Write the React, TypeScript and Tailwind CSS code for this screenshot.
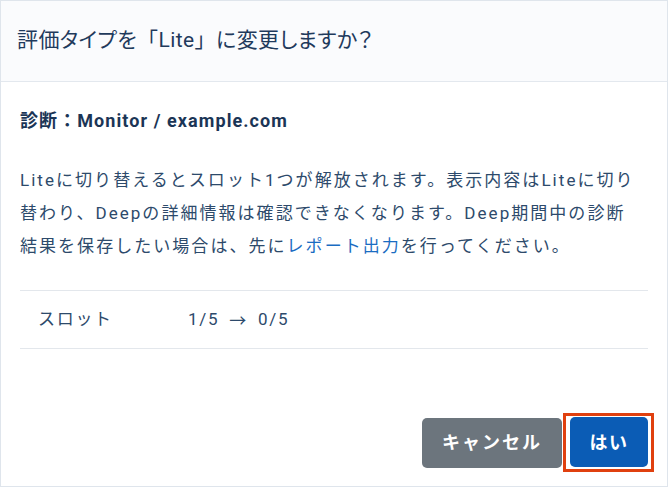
import React from "react";

export default function App() {
  return (
    <div
      className="w-[670px] h-[488px] bg-white"
      style={{ fontFamily: 'Roboto, "Noto Sans CJK JP", sans-serif' }}
    >
      <div className="w-[668px] h-[487px] border border-[#dfe5ec] flex flex-col bg-white">
        <div className="h-[81px] shrink-0 bg-[#fafbfd] border-b border-[#e3e8ee] flex items-center px-[16px]">
          <h1 className="text-[21px] text-[#1f3a5c] tracking-[0.02em] [font-feature-settings:'palt']">
            評価タイプを<span className="[font-feature-settings:normal]">「</span>Lite<span className="[font-feature-settings:normal]">」</span>に変更しますか？
          </h1>
        </div>
        <div className="flex-1 flex flex-col px-[19px]">
          <div className="mt-[26px] text-[18px] font-bold text-[#1b3556] leading-[26px] tracking-[0.06em]">
            診断：Monitor / example.com
          </div>
          <p className="mt-[30px] text-[17px] leading-[33px] text-[#2d4a6b] tracking-[0.12em] whitespace-nowrap">
            Liteに切り替えるとスロット1つが解放されます。表示内容はLiteに切り
            <br />
            替わり、Deepの詳細情報は確認できなくなります。Deep期間中の診断
            <br />
            結果を保存したい場合は、先に
            <span className="text-[#1a6cc2]">レポート出力</span>を行ってください。
          </p>
          <div className="mt-[27px] border-t border-b border-[#e3e7ec] h-[59px] flex items-center text-[17px] text-[#2d4a6b] tracking-[0.1em]">
            <span className="w-[168px] pl-[18px] shrink-0">スロット</span>
            <span className="flex items-center">
              1/5
              <span className="mx-[10px]" style={{ fontFamily: '"Noto Sans CJK JP", sans-serif' }}>→</span>
              0/5
            </span>
          </div>
          <div className="flex-1 flex items-end justify-end mr-[-6px] pb-[14px]">
            <div className="flex items-center gap-[1px]">
              <button className="h-[50px] w-[140px] rounded-[5px] bg-[#6c757d] text-white text-[18px] font-bold tracking-[0.11em]">
                キャンセル
              </button>
              <div className="border-[3px] border-[#e0400f] pt-[1px] pb-[2px] pl-[4px] pr-[3px]">
                <button className="h-[50px] w-[78px] rounded-[5px] bg-[#0b5cb5] text-white text-[18px] font-bold tracking-[0.08em] block">
                  はい
                </button>
              </div>
            </div>
          </div>
        </div>
      </div>
    </div>
  );
}
